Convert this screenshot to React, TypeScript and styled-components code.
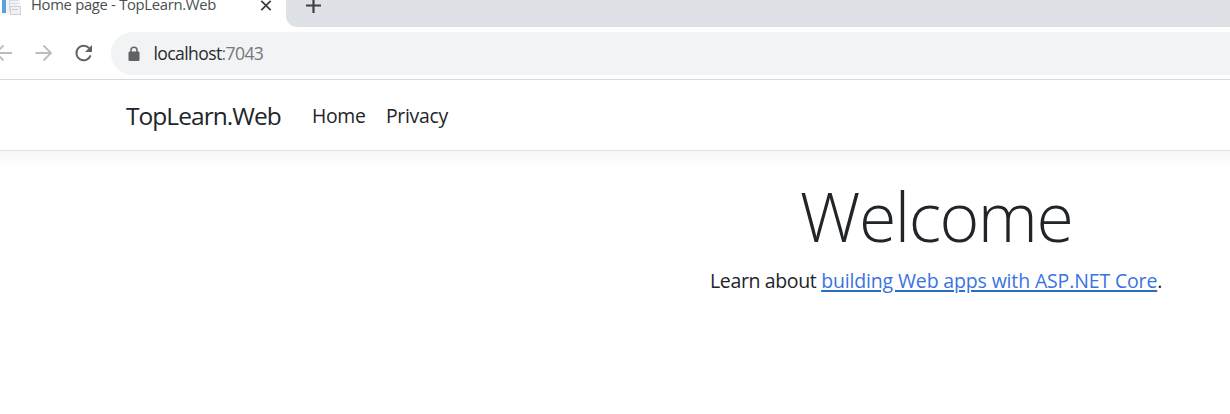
import React from "react";
import styled, { createGlobalStyle } from "styled-components";

const GlobalStyle = createGlobalStyle`
  * { box-sizing: border-box; }
  html, body { margin: 0; padding: 0; }
  body {
    overflow: hidden;
    background: #fff;
    color: #212529;
    font-family: "Open Sans", "Noto Sans", sans-serif;
    font-weight: 400;
  }
`;

const Window = styled.div`
  width: 1230px;
  height: 414px;
  display: flex;
  flex-direction: column;
  overflow: hidden;
  background: #fff;
`;

const TabStrip = styled.div`
  height: 27px;
  display: flex;
  flex: none;
`;

const Tab = styled.div`
  width: 286px;
  height: 27px;
  display: flex;
  align-items: flex-start;
  flex: none;
`;

const Favicon = styled.svg`
  width: 22px;
  height: 17px;
  flex: none;
`;

const TabTitle = styled.span`
  width: 228px;
  margin: -8px 0 0 9px;
  font-size: 14.8px;
  line-height: 24px;
  letter-spacing: -0.3px;
  color: #4a4e51;
  white-space: nowrap;
`;

const CloseIcon = styled.svg`
  width: 14px;
  height: 14px;
  margin-top: -2px;
  flex: none;
`;

const StripSpace = styled.div`
  flex: 1;
  height: 27px;
  padding-left: 19px;
  background: #dee1e6;
  border-bottom-left-radius: 11px;
`;

const PlusIcon = styled.svg`
  display: block;
  width: 16px;
  height: 16px;
  margin-top: -3px;
`;

const Toolbar = styled.div`
  height: 53px;
  display: flex;
  align-items: center;
  flex: none;
  border-bottom: 1px solid #dadce0;
`;

const NavIcons = styled.svg`
  width: 111px;
  height: 44px;
  flex: none;
`;

const AddressBar = styled.div`
  flex: 1;
  height: 43px;
  margin-top: 1px;
  padding-left: 16.5px;
  display: flex;
  align-items: center;
  background: #f1f3f4;
  border-radius: 22px 0 0 22px;
`;

const LockIcon = styled.svg`
  width: 12px;
  height: 16px;
  flex: none;
`;

const Url = styled.span`
  margin: -2px 0 0 14px;
  font-size: 17.6px;
  line-height: 24px;
  letter-spacing: -0.63px;
  color: #2a2b2e;
`;

const Port = styled.span`
  color: #74787c;
`;

const SiteHeader = styled.header`
  position: relative;
  height: 71px;
  margin: 0 -20px;
  padding-left: 146px;
  display: flex;
  align-items: center;
  flex: none;
  background: #fff;
  border-bottom: 1px solid #dee2e6;
  box-shadow: 0 5px 15px rgba(0, 0, 0, 0.05);
`;

const Brand = styled.a`
  width: 186px;
  padding-top: 1px;
  font-size: 24.5px;
  line-height: 38px;
  letter-spacing: -0.95px;
`;

const NavLink = styled.a<{ $width: number }>`
  width: ${(p) => p.$width}px;
  padding-top: 1px;
  font-size: 19.4px;
  line-height: 30px;
  letter-spacing: -0.3px;
  white-space: nowrap;
`;

const Main = styled.main`
  width: 450px;
  margin: 23px 0 0 711px;
  display: flex;
  flex-direction: column;
  align-items: center;
`;

const Heading = styled.h1`
  margin: 0;
  font-size: 68px;
  font-weight: 300;
  line-height: 84px;
  letter-spacing: -1.5px;
`;

const Intro = styled.p`
  margin: 8px 0 0;
  font-size: 19.5px;
  line-height: 30px;
  letter-spacing: -0.36px;
  white-space: nowrap;
`;

const DocsLink = styled.a`
  color: #3a73e2;
  letter-spacing: -0.15px;
  text-decoration: underline;
  text-decoration-color: #2670c4;
  text-decoration-thickness: 2px;
  text-underline-offset: 2px;
`;

export default function App() {
  return (
    <Window>
      <GlobalStyle />
      <TabStrip>
        <Tab>
          <Favicon viewBox="0 0 22 17">
            <rect x="2" y="0" width="18" height="14" fill="#f1f3f6" />
            <rect x="2" y="0" width="4" height="13" fill="#5ba0d8" />
            <path d="M9.5 0v11M9 3.5h9M9 0.5h9" stroke="#d6dbe1" />
            <rect x="10.5" y="6.5" width="10" height="8" fill="#f0f1f3" stroke="#ccd0d5" />
            <path d="M12 9.5h6" stroke="#c4c8ce" />
          </Favicon>
          <TabTitle>Home page - TopLearn.Web</TabTitle>
          <CloseIcon viewBox="0 0 14 14" fill="none" stroke="#3c4043" strokeWidth="1.8">
            <path d="M2.3 2.8l9.4 9.4M11.7 2.8l-9.4 9.4" />
          </CloseIcon>
        </Tab>
        <StripSpace>
          <PlusIcon viewBox="0 0 16 16" fill="none" stroke="#3c4043" strokeWidth="2.2">
            <path d="M8.5 0.5v15.5M1 8.5h15" />
          </PlusIcon>
        </StripSpace>
      </TabStrip>
      <Toolbar>
        <NavIcons viewBox="0 0 111 44" fill="none" strokeWidth="1.8">
          <path d="M12 22H-4M3.5 14.5L-4 22l7.5 7.5" stroke="#bbbdbf" />
          <path d="M35.5 22h15M43.5 14.5l7.5 7.5-7.5 7.5" stroke="#bbbdbf" />
          <path d="M89.2 17.2A7.3 7.3 0 1 0 90.6 24.4" stroke="#5f6368" strokeWidth="2" />
          <path d="M92 14v7h-7z" fill="#5f6368" />
        </NavIcons>
        <AddressBar>
          <LockIcon viewBox="0 0 12 16">
            <path d="M3 7V4.2a3 3 0 0 1 6 0V7" fill="none" stroke="#5f6368" strokeWidth="1.5" />
            <rect x="0.5" y="5.5" width="11" height="9.5" rx="1.3" fill="#5f6368" />
          </LockIcon>
          <Url>
            localhost<Port>:7043</Port>
          </Url>
        </AddressBar>
      </Toolbar>
      <SiteHeader>
        <Brand>TopLearn.Web</Brand>
        <NavLink $width={74}>Home</NavLink>
        <NavLink $width={62}>Privacy</NavLink>
      </SiteHeader>
      <Main>
        <Heading>Welcome</Heading>
        <Intro>
          Learn about <DocsLink>building Web apps with ASP.NET Core</DocsLink>.
        </Intro>
      </Main>
    </Window>
  );
}
